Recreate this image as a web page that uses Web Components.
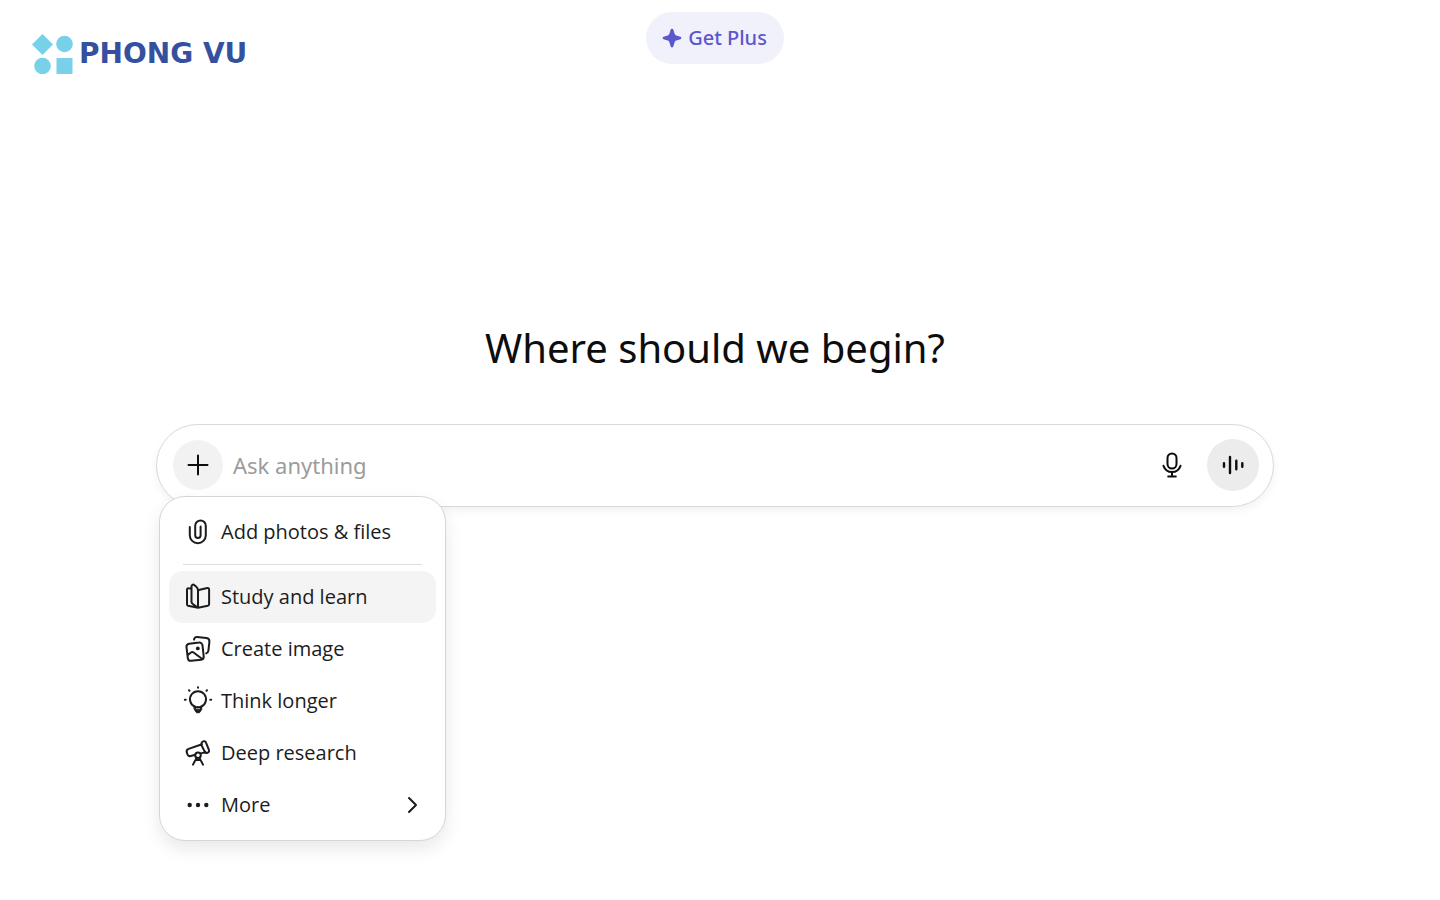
<!DOCTYPE html>
<html lang="en">
<head>
<meta charset="utf-8">
<meta name="viewport" content="width=device-width, initial-scale=1">
<title>Phong Vu</title>
<style>
    body {
        margin: 0;
        background: #fff;
        color: #0d0d0d;
        font-family: "Noto Sans", "Open Sans", sans-serif;
        font-size: 20px;
    }
</style>
</head>
<body>
<chat-page>
    <brand-logo slot="logo">PHONG VU</brand-logo>
    <plus-button slot="action">Get Plus</plus-button>
    <page-title>Where should we begin?</page-title>
    <prompt-bar placeholder="Ask anything">
        <tool-menu slot="menu">
            <menu-item icon="clip">Add photos &amp; files</menu-item>
            <menu-divider></menu-divider>
            <menu-item icon="book" active>Study and learn</menu-item>
            <menu-item icon="image">Create image</menu-item>
            <menu-item icon="bulb">Think longer</menu-item>
            <menu-item icon="telescope">Deep research</menu-item>
            <menu-item icon="dots" more>More</menu-item>
        </tool-menu>
    </prompt-bar>
</chat-page>

<script>
// all icons share a 28x28 box
const icons = {
    plus: '<path d="M14 4.5v19M4.5 14h19"/>',
    clip: '<path d="M5.800 9v8.200a8 8 0 0 0 16 0V7.800a5.300 5.300 0 0 0-10.600 0v9.400a2.700 2.700 0 0 0 5.400 0V8.500"/>',
    book: '<path d="M14 24.800 4 22.700a1.300 1.300 0 0 1-1-1.300V6.600c0-.9.700-1.500 1.600-1.300l2.900.5M14 24.800l9.800-2.100c.8-.2 1.300-.8 1.300-1.600V6.400c0-1-.8-1.600-1.700-1.400l-7.700 1.800c-1 .2-1.700.9-1.700 1.900zM14 24.800V7.600c0-1.800-.5-2.900-1.700-3.900L10.200 2c-1.100-.9-2.700-.1-2.700 1.300v15.400c0 1 .4 1.700 1.300 2.300z"/>',
    image: '<path d="M5.200 8.700 15 7.600a3.100 3.100 0 0 1 3.500 2.700l1.200 11a3.100 3.100 0 0 1-2.700 3.400l-9.800 1.100a3.100 3.100 0 0 1-3.400-2.700L2.500 12.100a3.100 3.100 0 0 1 2.700-3.400zM3.600 20.200l3.300-2.700c.8-.7 1.800-.7 2.700 0l8.300 6.300M10 4.600l.3-.9c.5-1.200 1.500-1.800 2.800-1.700l9.300 1c1.900.3 3.200 1.900 3 3.800l-1 8.900c-.2 1.400-.9 2.300-2.200 2.700"/><circle cx="13.800" cy="13.400" r="1.900" fill="currentColor" stroke="none"/>',
    bulb: '<path d="M10.800 20.200v-.7a8 8 0 1 1 6.400 0v.7"/><path d="M10.300 19.700h7.400v2.700l-2.200 3.300h-3l-2.200-3.300z" fill="currentColor" stroke-width="1"/><path d="M12.300 21.700h3.400" stroke="#fff" stroke-width=".7"/><path d="M14 .2v.5M5 3.300l.5.500M23 3.300l-.5.500M.8 12.700h.9M26.300 12.700h.9"/>',
    telescope: '<path d="M18 5.200 4.600 9.900c-1.600.6-2.300 1.900-1.800 3.500l.6 1.800c.5 1.500 1.700 2.200 3.300 1.800l4.600-1.200M16.800 14.400l4.800-1.300M17.300 5.100l.3-1.200c.2-.8.8-1.300 1.600-1.500l.8-.2c.9-.2 1.600.2 1.900 1.100l3.100 7.900c.3.900 0 1.700-.8 2.200l-.8.4c-.9.400-1.800.2-2.300-.6l-.5-.8-3.100-6.200c-.2-.4-.3-.7-.2-1.100z"/><circle cx="14" cy="16.300" r="2.800"/><path d="M12.600 18.900 9 25.600M15.400 18.900l3.600 6.700M12.300 21h3.400"/>',
    dots: '<g fill="currentColor" stroke="none"><circle cx="5.700" cy="14" r="2.200"/><circle cx="14" cy="14" r="2.200"/><circle cx="22.300" cy="14" r="2.200"/></g>',
    chevron: '<path d="m11 7 7 7-7 7"/>',
    mic: '<rect x="9.500" y="2.500" width="9" height="15" rx="4.500"/><path d="M5.500 14.800c1.400 4 4.600 6.200 8.500 6.200s7.100-2.200 8.500-6.200M14 21v4.500M10.200 25.500h7.600"/>',
    voice: '<path stroke-width="2.400" d="M5 12.300v3.400M11 6v16M17.300 9.800v8.400M23.300 12.300v3.400"/>',
    spark: '<path fill="currentColor" stroke="none" d="M12.700 5.600c.4-1.300 2.200-1.300 2.600 0l1.300 4.100c.3.900.8 1.400 1.700 1.700l4.100 1.300c1.300.4 1.300 2.200 0 2.600l-4.100 1.300c-.9.300-1.400.8-1.700 1.700l-1.300 4.100c-.4 1.300-2.200 1.300-2.600 0l-1.300-4.100c-.3-.9-.8-1.400-1.700-1.700l-4.100-1.300c-1.300-.4-1.300-2.200 0-2.600l4.100-1.300c.9-.3 1.400-.8 1.700-1.700z"/>'
};

class UiIcon extends HTMLElement {
    constructor() {
        super();
        this.attachShadow({ mode: 'open' });
    }
    connectedCallback() {
        this.shadowRoot.innerHTML = `
        <style>
        :host {
            display: block;
            flex: none;
            width: 28px;
            height: 28px;
        }
        svg {
            display: block;
            width: 100%;
            height: 100%;
            overflow: visible;
            fill: none;
            stroke: currentColor;
            stroke-width: 2;
            stroke-linecap: round;
            stroke-linejoin: round;
        }
        </style>
        <svg viewBox="0 0 28 28" aria-hidden="true">${icons[this.getAttribute('name')]}</svg>
        `;
    }
}

class ChatPage extends HTMLElement {
    constructor() {
        super();
        this.attachShadow({ mode: 'open' });
        this.shadowRoot.innerHTML = `
        <style>
        :host {
            display: block;
            box-sizing: border-box;
            min-height: 100vh;
            padding: 12px 42px 0 32px;
        }
        header {
            display: grid;
            grid-template-columns: 1fr auto 1fr;
            align-items: start;
        }
        main {
            max-width: 1118px;
            margin: 246px auto 0;
        }
        </style>
        <header>
            <slot name="logo"></slot>
            <slot name="action"></slot>
        </header>
        <main><slot></slot></main>
        `;
    }
}

class BrandLogo extends HTMLElement {
    constructor() {
        super();
        this.attachShadow({ mode: 'open' });
        this.shadowRoot.innerHTML = `
        <style>
        :host {
            display: flex;
            align-items: center;
            gap: 6px;
            margin-top: 22px;
            color: #3650a0;
            font: bold 28px/40px "DejaVu Sans", sans-serif;
            white-space: nowrap;
        }
        svg {
            flex: none;
            fill: #78d0e9;
        }
        </style>
        <svg width="41" height="40" viewBox="0 0 41 40" aria-hidden="true">
            <path d="M10.500 0 21 10.500 10.500 21 0 10.500z"/>
            <circle cx="32.500" cy="10" r="8.300"/>
            <circle cx="10.500" cy="32" r="8.300"/>
            <path d="M24.500 24h16v16h-16z"/>
        </svg>
        <slot></slot>
        `;
    }
}

class PlusButton extends HTMLElement {
    constructor() {
        super();
        this.attachShadow({ mode: 'open' });
        this.shadowRoot.innerHTML = `
        <style>
        :host {
            display: block;
        }
        button {
            display: flex;
            align-items: center;
            gap: 2px;
            height: 52px;
            padding: 0 17px 0 12px;
            border: 0;
            border-radius: 26px;
            background: #f1f1fb;
            color: #5b57cd;
            font: 500 20px/28px "Noto Sans", "Open Sans", sans-serif;
            cursor: pointer;
        }
        </style>
        <button type="button"><ui-icon name="spark"></ui-icon><slot></slot></button>
        `;
    }
}

class PageTitle extends HTMLElement {
    constructor() {
        super();
        this.attachShadow({ mode: 'open' });
        this.shadowRoot.innerHTML = `
        <style>
        :host {
            display: block;
        }
        h1 {
            margin: 0 0 48px;
            font-size: 40px;
            font-weight: 400;
            line-height: 56px;
            text-align: center;
        }
        </style>
        <h1><slot></slot></h1>
        `;
    }
}

class PromptBar extends HTMLElement {
    constructor() {
        super();
        this.attachShadow({ mode: 'open' });
    }
    connectedCallback() {
        const text = this.getAttribute('placeholder');
        this.shadowRoot.innerHTML = `
        <style>
        :host {
            display: block;
            position: relative;
        }
        form {
            display: flex;
            align-items: center;
            box-sizing: border-box;
            height: 83px;
            padding: 0 14px 2px 16px;
            border: 1px solid #d9d9d9;
            border-radius: 42px;
            background: #fff;
            box-shadow: 0 4px 8px rgba(0, 0, 0, .05);
        }
        button {
            display: flex;
            align-items: center;
            justify-content: center;
            flex: none;
            width: 50px;
            height: 50px;
            padding: 0;
            border: 0;
            border-radius: 50%;
            background: none;
            color: #0d0d0d;
            cursor: pointer;
        }
        .add {
            background: #f2f2f2;
        }
        .mic {
            margin-right: 10px;
        }
        .voice {
            width: 52px;
            height: 52px;
            background: #ececec;
        }
        input {
            flex: 1;
            min-width: 0;
            padding: 0 10px;
            border: 0;
            outline: 0;
            background: none;
            color: inherit;
            font: inherit;
            font-size: 22px;
            line-height: 32px;
        }
        input::placeholder {
            color: #9b9b9b;
            opacity: 1;
        }
        ::slotted(tool-menu) {
            position: absolute;
            top: 72px;
            left: 3px;
        }
        </style>
        <form>
            <button class="add" type="button" aria-label="Add"><ui-icon name="plus"></ui-icon></button>
            <input type="text" placeholder="${text}" aria-label="${text}">
            <button class="mic" type="button" aria-label="Dictate"><ui-icon name="mic"></ui-icon></button>
            <button class="voice" type="button" aria-label="Voice"><ui-icon name="voice"></ui-icon></button>
        </form>
        <slot name="menu"></slot>
        `;
    }
}

class ToolMenu extends HTMLElement {
    constructor() {
        super();
        this.attachShadow({ mode: 'open' });
        this.shadowRoot.innerHTML = `
        <style>
        :host {
            display: block;
            box-sizing: border-box;
            width: 287px;
            padding: 9px;
            border: 1px solid #d6d6d6;
            border-radius: 26px;
            background: #fff;
            box-shadow: 0 8px 18px rgba(0, 0, 0, .09);
        }
        </style>
        <slot></slot>
        `;
    }
}

class MenuDivider extends HTMLElement {
    constructor() {
        super();
        this.attachShadow({ mode: 'open' });
        this.shadowRoot.innerHTML = `
        <style>
        :host {
            display: block;
        }
        hr {
            margin: 6px 14px;
            border: 0;
            border-top: 1px solid #dedede;
        }
        </style>
        <hr>
        `;
    }
}

class MenuItem extends HTMLElement {
    constructor() {
        super();
        this.attachShadow({ mode: 'open' });
    }
    connectedCallback() {
        this.shadowRoot.innerHTML = `
        <style>
        :host {
            display: block;
        }
        button {
            display: flex;
            align-items: center;
            gap: 9px;
            width: 100%;
            height: 52px;
            padding: 0 10px 0 15px;
            border: 0;
            border-radius: 14px;
            background: none;
            color: #1c1c1c;
            font: 20px/28px "Open Sans", "Noto Sans", sans-serif;
            text-align: left;
            white-space: nowrap;
            cursor: pointer;
        }
        button:hover, :host([active]) button {
            background: #f4f4f4;
        }
        .label {
            flex: 1;
        }
        </style>
        <button type="button">
            <ui-icon name="${this.getAttribute('icon')}"></ui-icon>
            <span class="label"><slot></slot></span>
            ${this.hasAttribute('more') ? '<ui-icon name="chevron"></ui-icon>' : ''}
        </button>
        `;
    }
}

customElements.define('ui-icon', UiIcon);
customElements.define('chat-page', ChatPage);
customElements.define('brand-logo', BrandLogo);
customElements.define('plus-button', PlusButton);
customElements.define('page-title', PageTitle);
customElements.define('prompt-bar', PromptBar);
customElements.define('tool-menu', ToolMenu);
customElements.define('menu-divider', MenuDivider);
customElements.define('menu-item', MenuItem);
</script>
</body>
</html>
